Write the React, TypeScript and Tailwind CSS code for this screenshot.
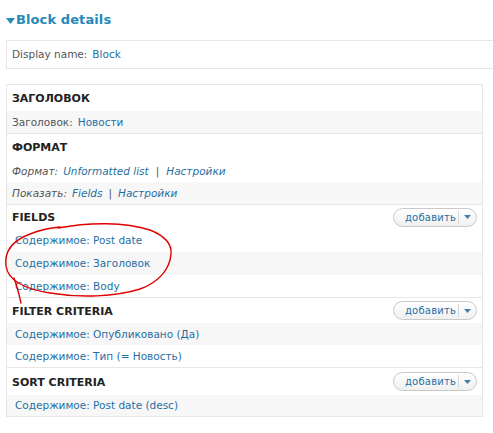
import React from "react";

const font = { fontFamily: '"DejaVu Sans", Verdana, sans-serif' };

function AddButton() {
  return (
    <div className="flex h-[19px] w-[84px] items-center rounded-full border border-[#c9c9c9] bg-gradient-to-b from-white to-[#f0f0f0] text-[10px] text-[#1f6fa3]">
      <span className="flex-1 pl-[11px] tracking-[0.2px]">добавить</span>
      <span className="h-[13px] w-px bg-[#d6d6d6]" />
      <span className="flex w-[17px] justify-center">
        <svg width="7" height="4" viewBox="0 0 7 4">
          <path d="M0 0h7L3.5 4z" fill="#4a7ea6" />
        </svg>
      </span>
    </div>
  );
}

function Header({ title, h, button }: { title: string; h: string; button?: boolean }) {
  return (
    <div className={`flex ${h} items-center justify-between pl-[5px] pr-[5px]`}>
      <span className="mt-[3px] text-[11px] font-bold text-[#222]">{title}</span>
      {button && <AddButton />}
    </div>
  );
}

function Row({
  gray,
  children,
  pl = "pl-[5px]",
  h = "h-[22px]",
}: {
  gray?: boolean;
  children: React.ReactNode;
  pl?: string;
  h?: string;
}) {
  return (
    <div className={`flex ${h} items-center pt-px ${pl} text-[10.5px] ${gray ? "bg-[#f7f7f7]" : "bg-white"}`}>
      {children}
    </div>
  );
}

const link = "text-[#1f6fa3]";
const label = "text-[#555]";

export default function App() {
  return (
    <div className="relative h-[433px] w-[493px] overflow-hidden bg-white" style={font}>
      <div className="flex h-[40px] items-center pl-[6px]">
        <svg width="9" height="6" viewBox="0 0 9 6" className="mr-px mt-px">
          <path d="M0 0h9L4.5 6z" fill="#2589ba" />
        </svg>
        <span className="text-[13px] font-bold tracking-[0.1px] text-[#2589ba]">Block details</span>
      </div>
      <div className="ml-[6px] flex h-[29px] w-[500px] items-center border border-[#e6e6e6] pl-[5px] pt-px text-[10.5px]">
        <span className={label}>Display name:</span>
        <span className={`ml-[5px] ${link}`}>Block</span>
      </div>

      <div className="ml-[6px] mt-[15px] w-[477px] border border-[#e6e6e6]">
        <Header title="ЗАГОЛОВОК" h="h-[26px]" />
        <Row gray>
          <span className={label}>Заголовок:</span>
          <span className={`ml-[5px] ${link}`}>Новости</span>
        </Row>
        <div className="border-t border-[#e6e6e6]">
          <Header title="ФОРМАТ" h="h-[26px]" />
          <Row>
            <span className={`italic ${label}`}>Формат:</span>
            <span className={`ml-[5px] italic ${link}`}>Unformatted list</span>
            <span className="mx-[7px] italic text-[#555]">|</span>
            <span className={`italic ${link}`}>Настройки</span>
          </Row>
          <Row gray>
            <span className={`italic ${label}`}>Показать:</span>
            <span className={`ml-[5px] italic ${link}`}>Fields</span>
            <span className="mx-[6px] italic text-[#555]">|</span>
            <span className={`italic ${link}`}>Настройки</span>
          </Row>
        </div>
        <div className="border-t border-[#e6e6e6]">
          <Header title="FIELDS" h="h-[24px]" button />
          <Row pl="pl-[8px]" h="h-[23px]">
            <span className={link}>Содержимое: Post date</span>
          </Row>
          <Row gray pl="pl-[8px]" h="h-[23px]">
            <span className={link}>Содержимое: Заголовок</span>
          </Row>
          <Row pl="pl-[8px]">
            <span className={link}>Содержимое: Body</span>
          </Row>
        </div>
        <div className="border-t border-[#e6e6e6]">
          <Header title="FILTER CRITERIA" h="h-[25px]" button />
          <Row gray pl="pl-[8px]">
            <span className={link}>Содержимое: Опубликовано (Да)</span>
          </Row>
          <Row pl="pl-[8px]">
            <span className={link}>Содержимое: Тип (= Новость)</span>
          </Row>
        </div>
        <div className="border-t border-[#e6e6e6]">
          <Header title="SORT CRITERIA" h="h-[27px]" button />
          <Row gray pl="pl-[8px]" h="h-[21px]">
            <span className={link}>Содержимое: Post date (desc)</span>
          </Row>
        </div>
      </div>

      {/* hand-drawn red marker around the fields list */}
      <svg className="pointer-events-none absolute left-0 top-0" width="493" height="433" viewBox="0 0 493 433">
        <path
          d="M58 228 C 90 222, 125 222, 150 230 C 165 236, 172 244, 171 254 C 170 268, 160 282, 140 289 C 115 297, 80 298, 50 293 C 25 289, 8 280, 6 266 C 4 250, 14 240, 30 234 C 40 230, 50 228, 60 227"
          fill="none"
          stroke="#e00000"
          strokeWidth="1.4"
          strokeLinecap="round"
        />
        <path d="M14 278 C 17 286, 19 294, 21 303" fill="none" stroke="#e00000" strokeWidth="1.4" strokeLinecap="round" />
      </svg>
    </div>
  );
}
